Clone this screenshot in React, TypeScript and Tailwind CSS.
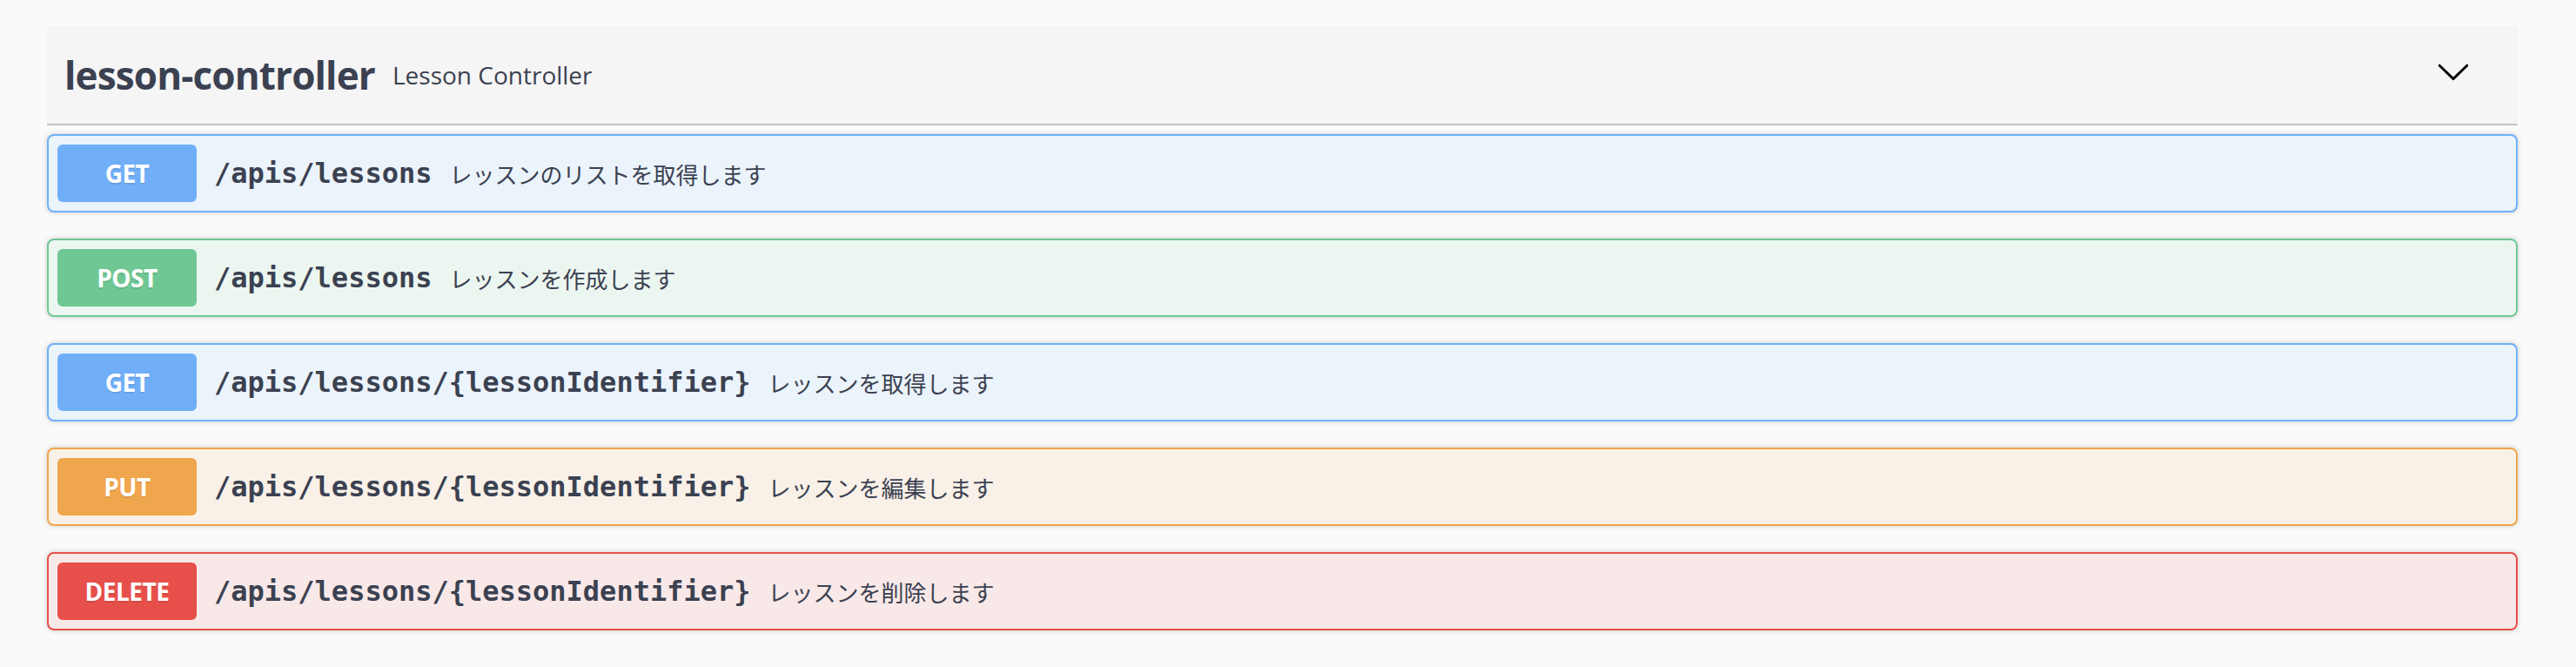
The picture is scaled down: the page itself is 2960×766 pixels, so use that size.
import React from "react";

type Tone = "get" | "post" | "put" | "delete";

const TONE: Record<Tone, { box: string; badge: string }> = {
  get: {
    box: "border-[#6fb0f8] bg-[#ebf3fb]",
    badge: "bg-[#70aff8]",
  },
  post: {
    box: "border-[#6fc795] bg-[#ecf6f0]",
    badge: "bg-[#6fc794]",
  },
  put: {
    box: "border-[#f0a54c] bg-[#f9f1e8]",
    badge: "bg-[#f0a64c]",
  },
  delete: {
    box: "border-[#e7504a] bg-[#f8e8e8]",
    badge: "bg-[#e7504a]",
  },
};

const ops: { method: string; path: string; desc: string; tone: Tone }[] = [
  { method: "GET", path: "/apis/lessons", desc: "レッスンのリストを取得します", tone: "get" },
  { method: "POST", path: "/apis/lessons", desc: "レッスンを作成します", tone: "post" },
  { method: "GET", path: "/apis/lessons/{lessonIdentifier}", desc: "レッスンを取得します", tone: "get" },
  { method: "PUT", path: "/apis/lessons/{lessonIdentifier}", desc: "レッスンを編集します", tone: "put" },
  { method: "DELETE", path: "/apis/lessons/{lessonIdentifier}", desc: "レッスンを削除します", tone: "delete" },
];

function Chevron() {
  return (
    <svg viewBox="0 0 20 20" className="w-[40px] h-[40px] mb-[9px] shrink-0" fill="#000">
      <path d="M17.418 6.109c.272-.268.709-.268.979 0s.271.701 0 .969l-7.908 7.83c-.27.268-.707.268-.979 0l-7.908-7.83c-.27-.268-.27-.701 0-.969.271-.268.709-.268.979 0L10 13.25l7.418-7.141z" />
    </svg>
  );
}

export default function App() {
  return (
    <div className="min-h-screen bg-[#fafafa] pl-[54px] pr-[67px] pt-[30px] text-[#3b4151] font-['Open_Sans',sans-serif]">
      {/* tag header */}
      <div className="flex items-center h-[114px] bg-[#f5f5f5] border-b-2 border-[#c1c3c7] pl-[20px] pr-[54px] mb-[10px]">
        <h4 className="text-[44px] font-bold tracking-[-0.85px]">lesson-controller</h4>
        <small className="flex-1 px-[20px] text-[28px]">Lesson Controller</small>
        <Chevron />
      </div>

      <div className="flex flex-col gap-[30px]">
        {ops.map((op, i) => {
          const t = TONE[op.tone];
          return (
            <div
              key={i}
              className={`flex items-center rounded-[8px] border-2 p-[10px] shadow-[0_0_6px_rgba(0,0,0,0.19)] ${t.box}`}
            >
              <span
                className={`flex items-center justify-center w-[160px] h-[66px] shrink-0 rounded-[6px] text-white text-[28px] font-bold tracking-[-0.5px] [text-shadow:0_2px_0_rgba(0,0,0,0.1)] ${t.badge}`}
              >
                {op.method}
              </span>
              <span className="px-[20px] font-['DejaVu_Sans_Mono',monospace] font-semibold text-[32px]">
                {op.path}
              </span>
              <span className="font-['Noto_Sans_CJK_JP',sans-serif] text-[26px]">{op.desc}</span>
            </div>
          );
        })}
      </div>
    </div>
  );
}
